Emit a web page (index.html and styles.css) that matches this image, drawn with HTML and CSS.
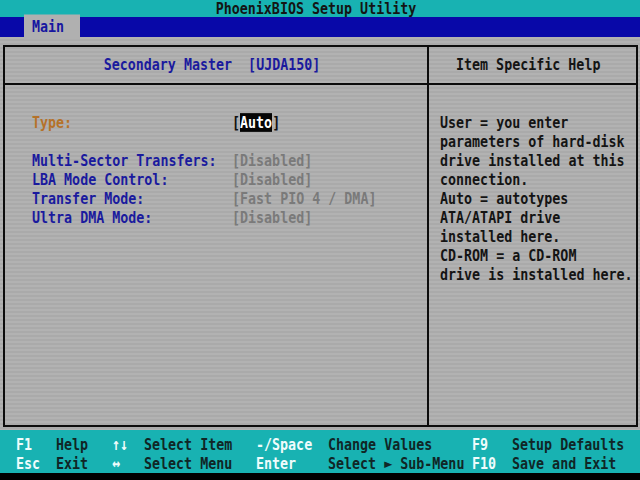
FILE: index.html
```html
<!DOCTYPE html>
<html lang="en">
  <head>
    <meta charset="UTF-8" />
    <meta name="viewport" content="width=device-width, initial-scale=1.0" />
    <title>PhoenixBIOS Setup Utility</title>
    <link rel="stylesheet" href="styles.css">
  </head>
  <body>
    <div class="screen">
      <header class="title"><span>PhoenixBIOS Setup Utility</span></header>
      <nav class="menubar"><span class="tab">Main</span></nav>

      <main class="desk">
        <div class="frame">
          <section class="panel items">
            <div class="panel-head"><span>Secondary Master  [UJDA150]</span></div>
            <div class="panel-body">
              <div class="row current"><span class="label">Type:</span><span class="value">[<b>Auto</b>]</span></div>
              <div class="row"></div>
              <div class="row"><span class="label">Multi-Sector Transfers:</span><span class="value">[Disabled]</span></div>
              <div class="row"><span class="label">LBA Mode Control:</span><span class="value">[Disabled]</span></div>
              <div class="row"><span class="label">Transfer Mode:</span><span class="value">[Fast PIO 4 / DMA]</span></div>
              <div class="row"><span class="label">Ultra DMA Mode:</span><span class="value">[Disabled]</span></div>
            </div>
          </section>
          <section class="panel help">
            <div class="panel-head"><span>Item Specific Help</span></div>
            <div class="panel-body">
              <span class="line">User = you enter</span>
              <span class="line">parameters of hard-disk</span>
              <span class="line">drive installed at this</span>
              <span class="line">connection.</span>
              <span class="line">Auto = autotypes</span>
              <span class="line">ATA/ATAPI drive</span>
              <span class="line">installed here.</span>
              <span class="line">CD-ROM = a CD-ROM</span>
              <span class="line">drive is installed here.</span>
            </div>
          </section>
        </div>
      </main>

      <footer class="keys">
        <span class="key">F1</span><span>Help</span><span class="key">↑↓</span><span>Select Item</span>
        <span class="key">-/Space</span><span>Change Values</span><span class="key">F9</span><span>Setup Defaults</span>
        <span class="key">Esc</span><span>Exit</span><span class="key">↔</span><span>Select Menu</span>
        <span class="key">Enter</span><span>Select ► Sub-Menu</span><span class="key">F10</span><span>Save and Exit</span>
      </footer>
    </div>
  </body>
</html>
```

FILE: styles.css
```css
* {
  margin: 0;
  padding: 0;
  box-sizing: border-box;
}
body {
  background: #000;
  font-family: "DejaVu Sans Mono", "Liberation Mono", monospace;
  font-size: 13.333px;
  font-weight: bold;
}
.screen {
  width: 640px;
  height: 480px;
  display: flex;
  flex-direction: column;
  background: #000;
}

/* text mode glyphs are taller than they are wide */
.title span,
.tab,
.panel-head span,
.row,
.help .line,
.keys span {
  display: block;
  transform: scaleY(1.25);
}
.title span,
.tab,
.panel-head span {
  display: inline-block;
}

.title {
  height: 17px;
  line-height: 17px;
  background: #18b2b2;
  color: #141414;
  text-align: center;
  padding-right: 8px;
  white-space: pre;
}

.menubar {
  height: 20px;
  background: #0808a8;
  padding-left: 24px;
  display: flex;
}
.tab {
  height: 20px;
  line-height: 20px;
  padding: 0 16px 0 8px;
  color: #1616a0;
  background: #b0b0b0;
}

.desk {
  height: 393px;
  padding: 8px 2px 0 3px;
  background: repeating-linear-gradient(#b2b2b2 0 2px, #aaaaaa 2px 4px);
}
.frame {
  height: 382px;
  display: flex;
  border: 2px solid #0c0c0c;
}
.panel {
  display: flex;
  flex-direction: column;
}
.items {
  width: 424px;
  border-right: 2px solid #0c0c0c;
}
.help {
  flex: 1;
}
.panel-head {
  height: 38px;
  line-height: 36px;
  border-bottom: 2px solid #0c0c0c;
  white-space: pre;
}
.items .panel-head {
  text-align: center;
  padding-right: 8px;
  color: #1a1a9e;
}
.help .panel-head {
  padding-left: 27px;
  color: #141414;
}
.panel-body {
  padding-top: 28px;
}

.row {
  display: grid;
  grid-template-columns: 200px auto;
  height: 19px;
  line-height: 19px;
  padding-left: 27px;
  white-space: pre;
  color: #1a1a9e;
}
.row .value {
  color: #7a7a7a;
}
.row.current .label {
  color: #b5722a;
}
.row.current .value {
  color: #111;
}
.row.current b {
  color: #fff;
  background: #050505;
}

.help .panel-body {
  padding-left: 11px;
  color: #141414;
}
.help .line {
  height: 19px;
  line-height: 19px;
  white-space: pre;
}

.keys {
  height: 43px;
  padding: 5px 0 0 16px;
  background: #18b2b2;
  color: #102626;
  display: grid;
  grid-template-columns: 40px 56px 32px 112px 72px 144px 40px 1fr;
  grid-auto-rows: 19px;
  line-height: 19px;
  white-space: pre;
}
.keys .key {
  color: #effcfc;
}
```
